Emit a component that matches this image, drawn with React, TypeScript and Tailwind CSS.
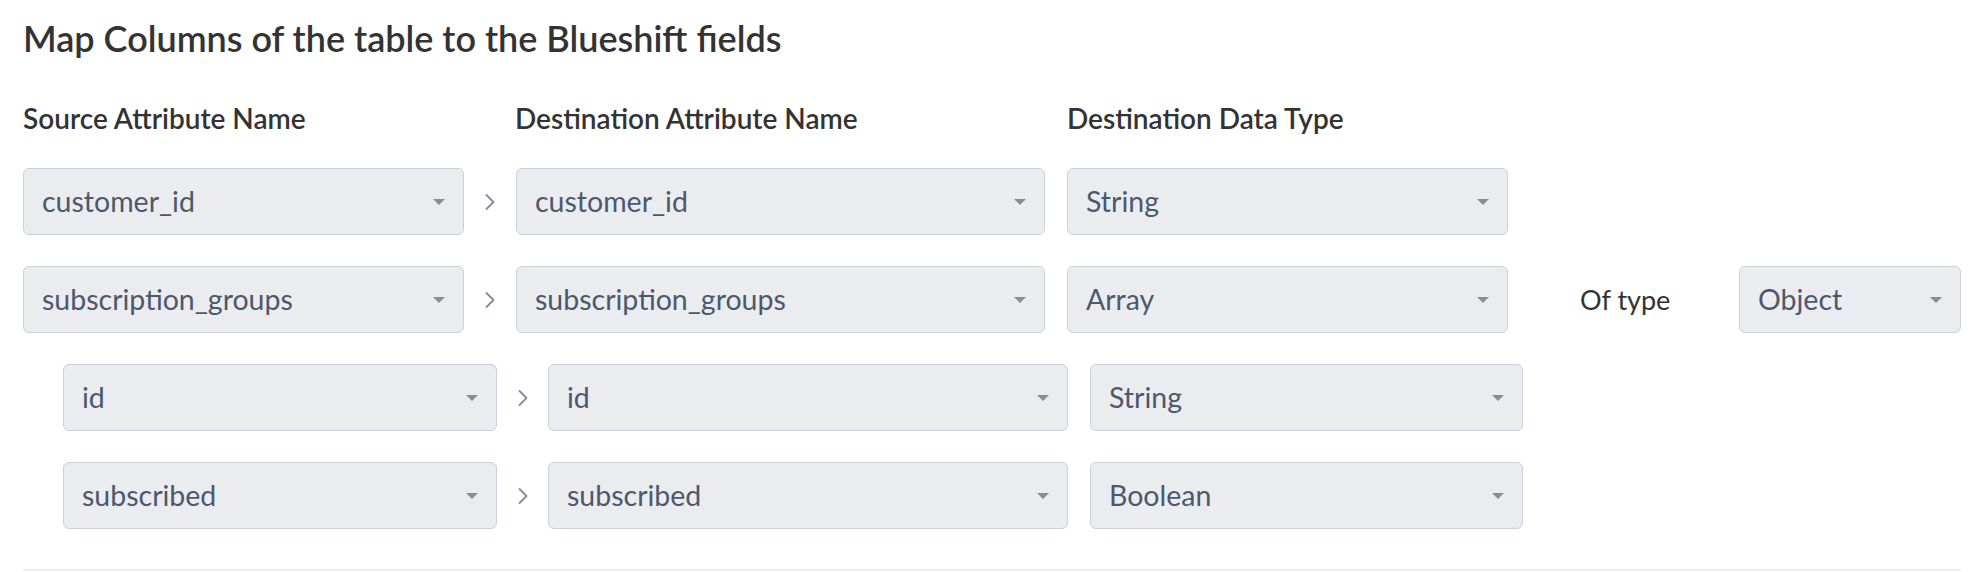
import React from "react"

type Row = {
  nested?: boolean
  source: string
  dest: string
  type: string
  ofType?: string
}

const ROWS: Row[] = [
  { source: "customer_id", dest: "customer_id", type: "String" },
  { source: "subscription_groups", dest: "subscription_groups", type: "Array", ofType: "Object" },
  { nested: true, source: "id", dest: "id", type: "String" },
  { nested: true, source: "subscribed", dest: "subscribed", type: "Boolean" },
]

function Caret() {
  return <span className="w-0 h-0 border-l-[6px] border-r-[6px] border-t-[6px] border-l-transparent border-r-transparent border-t-[#8d8d8d] flex-shrink-0" />
}

function Select({ value, width }: { value: string; width: string }) {
  return (
    <div className={`${width} h-[67px] flex items-center justify-between pl-[18px] pr-[18px] bg-[#ebecf0] border border-[#cbd0d9] rounded-[6px] flex-shrink-0`}>
      <span className="text-[28.5px] text-[#4c596c] leading-none">{value}</span>
      <Caret />
    </div>
  )
}

function Chevron({ width }: { width: string }) {
  return (
    <div className={`${width} flex items-center justify-center flex-shrink-0`}>
      <svg width="12" height="18" viewBox="0 0 12 18" fill="none">
        <path d="M2.5 2 L9.5 9 L2.5 16" stroke="#7f8ca3" strokeWidth="1.8" strokeLinecap="round" strokeLinejoin="round" />
      </svg>
    </div>
  )
}

export default function App() {
  return (
    <div className="w-[1982px] h-[572px] bg-white overflow-hidden font-['Lato',sans-serif]">
      <div className="pl-[23px] pr-[21px]">
        <div className="h-[76px] flex items-center">
          <h2 className="text-[36px] font-semibold text-[#333333] leading-none">Map Columns of the table to the Blueshift fields</h2>
        </div>
        <div className="h-[84px] flex items-center text-[28px] font-semibold text-[#333333] leading-none">
          <span className="w-[492px]">Source Attribute Name</span>
          <span className="w-[552px]">Destination Attribute Name</span>
          <span>Destination Data Type</span>
        </div>

        <div className="mt-[8px] flex flex-col gap-[31px]">
          {ROWS.map((row, i) =>
            row.nested ? (
              <div key={i} className="flex items-center pl-[40px]">
                <Select value={row.source} width="w-[434px]" />
                <Chevron width="w-[51px]" />
                <Select value={row.dest} width="w-[520px]" />
                <div className="w-[22px]" />
                <Select value={row.type} width="w-[433px]" />
              </div>
            ) : (
              <div key={i} className="flex items-center">
                <Select value={row.source} width="w-[441px]" />
                <Chevron width="w-[52px]" />
                <Select value={row.dest} width="w-[529px]" />
                <div className="w-[22px]" />
                <Select value={row.type} width="w-[441px]" />
                {row.ofType && (
                  <>
                    <div className="w-[231px] pl-[72px] text-[27px] text-[#333333] leading-none">Of type</div>
                    <Select value={row.ofType} width="w-[222px]" />
                  </>
                )}
              </div>
            )
          )}
        </div>

        <div className="mt-[40px] h-[2px] bg-[#ececee]" />
      </div>
    </div>
  )
}
